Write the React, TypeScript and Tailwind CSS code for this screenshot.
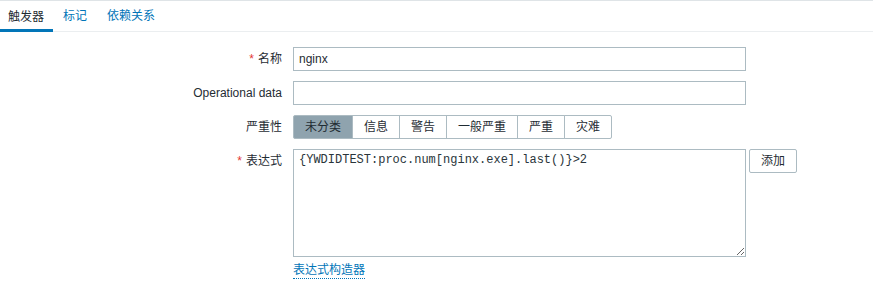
import React from 'react';

const severities = ['未分类', '信息', '警告', '一般严重', '严重', '灾难'];

const Label = ({ text, required }: { text: string; required?: boolean }) => (
  <div className="flex h-[24px] items-center justify-end whitespace-nowrap">
    {required && <span className="mr-[4px] text-[#e33734]">*</span>}
    {text}
  </div>
);

const App: React.FC = () => {
  return (
    <div className="h-[285px] w-[873px] bg-white text-[12px] leading-[14px] text-[#1f2c33] font-['Liberation_Sans','Noto_Sans_CJK_SC',sans-serif]">
      <div className="h-px bg-[#dfe4e7]" />
      <div className="flex h-[31px] border-b border-[#ebeef0]">
        <div className="-mb-px flex items-center border-b-[3px] border-[#0275b8] pl-[8px] pr-[9px] pt-[3px]">触发器</div>
        <div className="flex items-center px-[10px] text-[#0275b8]">标记</div>
        <div className="flex items-center px-[10px] text-[#0275b8]">依赖关系</div>
      </div>

      <div className="grid grid-cols-[282px_1fr] gap-x-[11px] gap-y-[10px] pt-[15px]">
        <Label text="名称" required />
        <input
          readOnly
          defaultValue="nginx"
          className="h-[24px] w-[453px] border border-[#acbbc2] px-[5px] text-[12px] text-[#1f2c33] outline-none"
        />

        <Label text="Operational data" />
        <input readOnly className="h-[24px] w-[453px] border border-[#acbbc2] px-[5px] outline-none" />

        <Label text="严重性" />
        <div className="flex h-[24px]">
          {severities.map((s, i) => (
            <div
              key={s}
              className={
                'flex items-center border border-[#acbbc2] px-[11px] ' +
                (i > 0 ? '-ml-px ' : 'rounded-l-[2px] ') +
                (i === severities.length - 1 ? 'rounded-r-[2px] ' : '') +
                (i === 0 ? 'bg-[#8fa3ae] text-[#1f2c33]' : 'bg-white')
              }
            >
              {s}
            </div>
          ))}
        </div>

        <Label text="表达式" required />
        <div>
          <div className="flex items-start gap-[3px]">
            <textarea
              readOnly
              defaultValue="{YWDIDTEST:proc.num[nginx.exe].last()}>2"
              className="h-[108px] w-[453px] border border-[#acbbc2] px-[5px] py-[3px] font-['Liberation_Mono',monospace] text-[12px] leading-[14px] text-[#2a353b] outline-none"
            />
            <div className="flex h-[24px] w-[48px] items-center justify-center rounded-[2px] border border-[#acbbc2] bg-white">
              添加
            </div>
          </div>
          <div className="mt-[6px]">
            <span className="border-b border-dotted border-[#0275b8] pb-px text-[#0275b8]">表达式构造器</span>
          </div>
        </div>
      </div>
    </div>
  );
};

export default App;
